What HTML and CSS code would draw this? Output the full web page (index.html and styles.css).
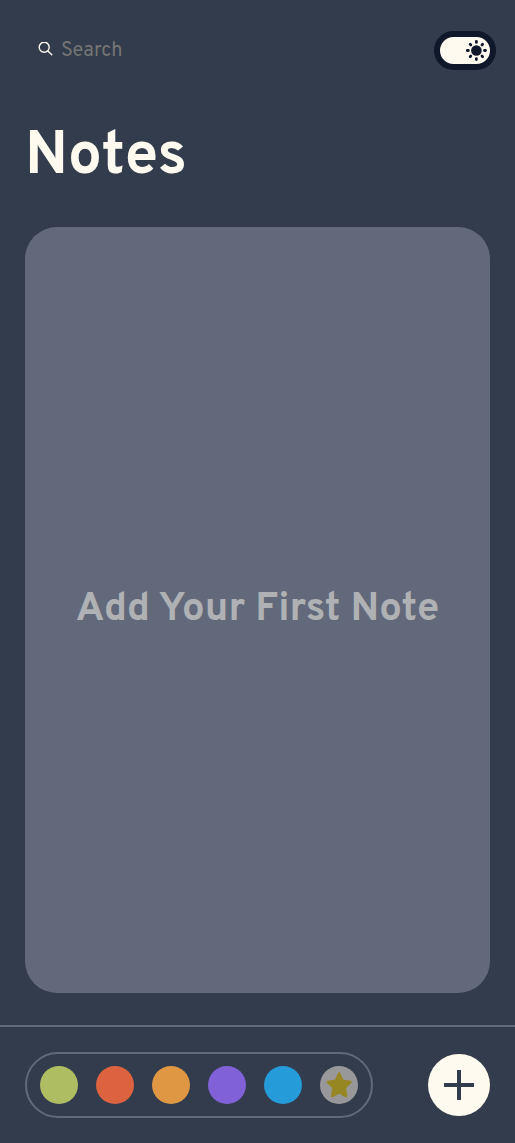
FILE: index.html
```html
<!DOCTYPE html>
<html lang="en">
<head>
  <meta charset="utf-8">
  <meta name="viewport" content="width=device-width, initial-scale=1">
  <title>Notes</title>
  <link rel="stylesheet" href="styles.css">
</head>
<body class="app">
  <header class="topbar">
    <label class="search">
      <svg class="search-icon" viewBox="0 0 16 16" aria-hidden="true">
        <circle cx="6.2" cy="5.2" r="5"/>
        <path d="M9.9 8.9 13.8 12.8"/>
      </svg>
      <input class="search-input" type="search" placeholder="Search" aria-label="Search notes">
    </label>
    <button class="theme-toggle" type="button" aria-label="Switch theme">
      <svg class="sun" viewBox="0 0 22 22" aria-hidden="true">
        <circle cx="11.4" cy="11.5" r="5.3" fill="currentColor"/>
        <path d="M11.4 2.4v1M11.4 19.6v1M2.3 11.5h1M19.5 11.5h1M5.2 5.3l.6.6M17 17.1l.6.6M5.2 17.7l.6-.6M17 5.9l.6-.6"/>
      </svg>
    </button>
  </header>

  <main class="content">
    <h1 class="title">Notes</h1>
    <section class="empty-card">
      <p class="empty-text">Add Your First Note</p>
    </section>
  </main>

  <footer class="toolbar">
    <div class="filters">
      <button class="dot green" type="button" aria-label="Green notes"></button>
      <button class="dot red" type="button" aria-label="Red notes"></button>
      <button class="dot orange" type="button" aria-label="Orange notes"></button>
      <button class="dot purple" type="button" aria-label="Purple notes"></button>
      <button class="dot blue" type="button" aria-label="Blue notes"></button>
      <button class="dot favorite" type="button" aria-label="Favorite notes">
        <svg class="star" viewBox="0 0 28 28" aria-hidden="true">
          <path d="M14.2 2.5 17.6 9.9 25.5 11 19.8 16.7 21.1 25 14.2 21.2 7.3 25 8.6 16.7 2.9 11 10.8 9.9Z"/>
        </svg>
      </button>
    </div>
    <button class="add" type="button" aria-label="Add note">
      <svg class="plus" viewBox="0 0 30 30" aria-hidden="true">
        <path d="M15 0v30M0 15h30"/>
      </svg>
    </button>
  </footer>
</body>
</html>
```

FILE: styles.css
```css
* {
  box-sizing: border-box;
}

.app {
  display: flex;
  flex-direction: column;
  min-height: 100vh;
  margin: 0;
  background: #333c4c;
  color: #fffaf0;
  font-family: Overpass, Roboto, "Noto Sans", sans-serif;
}

button {
  padding: 0;
  border: 0;
  cursor: pointer;
}

.topbar {
  display: flex;
  align-items: center;
  justify-content: space-between;
  height: 100px;
  padding: 0 19px 0 38px;
}

.search {
  display: flex;
  align-items: center;
  flex: 1;
  gap: 7px;
}

.search-icon {
  width: 16px;
  height: 16px;
  fill: none;
  stroke: #fffaf0;
  stroke-width: 1.4;
  stroke-linecap: round;
}

.search-input {
  width: 100%;
  max-width: 240px;
  padding: 2px 0 0;
  border: 0;
  outline: 0;
  background: transparent;
  color: #fffaf0;
  font: 400 20px/24px Overpass, Roboto, "Noto Sans", sans-serif;
}

.search-input::placeholder {
  color: #757575;
  opacity: 1;
}

.theme-toggle {
  display: flex;
  align-items: center;
  justify-content: flex-end;
  width: 62px;
  height: 39px;
  padding-right: 3px;
  border: 6px solid #0f172a;
  border-radius: 20px;
  background: #fffaf0;
  color: #0f172a;
}

.sun {
  width: 22px;
  height: 22px;
  fill: none;
  stroke: currentColor;
  stroke-width: 2.8;
  stroke-linecap: round;
}

.sun circle {
  stroke: none;
}

.content {
  display: flex;
  flex: 1;
  flex-direction: column;
  padding: 20px 25px 32px;
}

.title {
  margin: 0 0 31px;
  font-size: 60px;
  font-weight: 700;
  line-height: 76px;
}

.empty-card {
  display: flex;
  flex: 1;
  align-items: center;
  justify-content: center;
  border-radius: 32px;
  background: #62697b;
}

.empty-text {
  margin: 0;
  color: #b0b1b5;
  font-size: 40px;
  font-weight: 700;
  line-height: 48px;
  text-align: center;
}

.toolbar {
  display: flex;
  align-items: center;
  justify-content: space-between;
  padding: 25px;
  border-top: 2px solid #62697b;
}

.filters {
  display: flex;
  gap: 18px;
  padding: 12px 13px;
  border: 2px solid #62697b;
  border-radius: 33px;
}

.dot {
  width: 38px;
  height: 38px;
  border-radius: 50%;
}

.green {
  background: #afbd62;
}

.red {
  background: #dd6340;
}

.orange {
  background: #df9743;
}

.purple {
  background: #8061d8;
}

.blue {
  background: #269bda;
}

.favorite {
  display: grid;
  place-items: center;
  background: #98989b;
}

.star {
  width: 28px;
  height: 28px;
  fill: #978723;
  stroke: #978723;
  stroke-width: 2.6;
  stroke-linejoin: round;
}

.add {
  display: grid;
  place-items: center;
  width: 62px;
  height: 62px;
  border-radius: 50%;
  background: #fffaf0;
}

.plus {
  width: 30px;
  height: 30px;
  fill: none;
  stroke: #333c4c;
  stroke-width: 4;
}
```
